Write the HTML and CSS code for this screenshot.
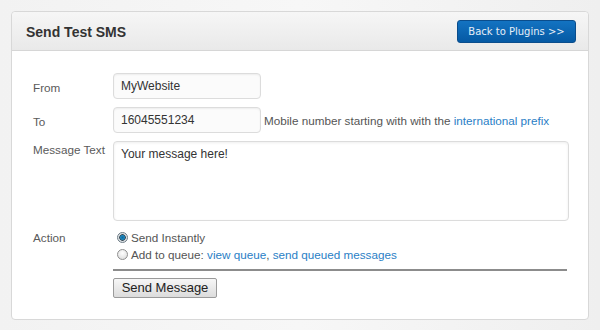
FILE: index.html
```html
<!DOCTYPE html>
<html>
<head>
<meta charset="utf-8">
<link rel="stylesheet" href="styles.css">
</head>
<body>
<div class="panel">
  <div class="panel-head">
    <h2 class="title">Send Test SMS</h2>
    <a class="btn-primary" href="#">Back to Plugins &gt;&gt;</a>
  </div>
  <form class="panel-body">
    <div class="row">
      <label class="lbl">From</label>
      <div class="field"><input class="txt" type="text" value="MyWebsite"></div>
    </div>
    <div class="row">
      <label class="lbl">To</label>
      <div class="field"><input class="txt" type="text" value="16045551234"><span class="hint">Mobile number starting with with the <a href="#">international prefix</a></span></div>
    </div>
    <div class="row row-top">
      <label class="lbl lbl-top">Message Text</label>
      <div class="field"><textarea class="area">Your message here!</textarea></div>
    </div>
    <div class="row row-top action">
      <label class="lbl lbl-action">Action</label>
      <div class="field options">
        <label class="opt"><input class="radio" type="radio" name="act" checked>Send Instantly</label>
        <label class="opt"><input class="radio" type="radio" name="act">Add to queue: <a href="#">view queue</a>, <a href="#">send queued messages</a></label>
        <div class="sep"></div>
        <button class="btn" type="button">Send Message</button>
      </div>
    </div>
  </form>
</div>
</body>
</html>
```
FILE: styles.css
```css
html, body {
  margin: 0;
  padding: 0;
}
body {
  background: linear-gradient(90deg, #f2f2f2, #f7f7f7 50%, #efefef);
  width: 600px;
  height: 330px;
  font-family: "Liberation Sans", Arial, sans-serif;
  font-size: 11.7px;
  color: #555;
  overflow: hidden;
}
a {
  color: #2a80c6;
  text-decoration: none;
}
.panel {
  margin: 11px 0 0 11px;
  width: 576px;
  height: 307px;
  background: #fff;
  border: 1px solid #d8d8d8;
  border-radius: 4px;
  box-sizing: content-box;
}
.panel-head {
  height: 38px;
  display: flex;
  align-items: center;
  justify-content: space-between;
  padding: 0 12px 0 14px;
  background: linear-gradient(#f6f6f6, #e9e9e9);
  border-bottom: 1px solid #d6d6d6;
  border-radius: 4px 4px 0 0;
}
.title {
  margin: 0;
  font-size: 14px;
  font-weight: bold;
  color: #333;
  padding-top: 1px;
}
.btn-primary {
  display: flex;
  align-items: center;
  justify-content: center;
  width: 117px;
  height: 21px;
  border: 1px solid #0a4d8c;
  border-radius: 3px;
  background: linear-gradient(#1373c2, #0559a3);
  color: #e6eef7;
  font-family: "DejaVu Sans", Verdana, sans-serif;
  font-size: 10px;
}
.panel-body {
  padding: 22px 20px 0 21px;
  display: flex;
  flex-direction: column;
  gap: 8px;
}
.row {
  display: grid;
  grid-template-columns: 80px 1fr;
  align-items: center;
}
.row-top {
  align-items: start;
}
.lbl {
  color: #5a5a5a;
  padding-top: 2px;
}
.lbl-top {
  padding-top: 2px;
}
.lbl-action {
  padding-top: 2px;
}
.field {
  display: flex;
  align-items: center;
}
.txt {
  box-sizing: border-box;
  width: 148px;
  height: 26px;
  border: 1px solid #dcdcdc;
  border-radius: 4px;
  background: #fbfbfb;
  box-shadow: inset 0 1px 2px rgba(0,0,0,0.06);
  padding: 0 7px;
  font-family: "Liberation Sans", Arial, sans-serif;
  font-size: 12px;
  color: #333;
  margin: 0;
}
.hint {
  margin-left: 3px;
  color: #555;
}
.area {
  box-sizing: border-box;
  width: 456px;
  height: 80px;
  border: 1px solid #dcdcdc;
  border-radius: 4px;
  background: #fff;
  box-shadow: inset 0 1px 3px rgba(0,0,0,0.07);
  padding: 5px 7px;
  font-family: "Liberation Sans", Arial, sans-serif;
  font-size: 12px;
  color: #333;
  resize: none;
  margin: 0;
}
.options {
  flex-direction: column;
  align-items: flex-start;
  padding-top: 0;
}
.opt {
  display: flex;
  align-items: center;
  height: 17px;
  color: #555;
  white-space: pre;
}
.radio {
  -webkit-appearance: none;
  appearance: none;
  width: 11px;
  height: 11px;
  margin: 0 3px 0 4px;
  border: 1px solid #8f8f8f;
  border-radius: 50%;
  background: radial-gradient(circle at 50% 35%, #ffffff, #d8d8d8);
  box-sizing: border-box;
}
.radio:checked {
  background: radial-gradient(circle, #0f6a9c 0, #1a86bf 2px, #3b4a55 3px, #cfd6da 3.5px, #eef1f3 5px);
  border-color: #6e7c86;
}
.sep {
  width: 454px;
  height: 0;
  border-top: 2px solid #8c8c8c;
  margin-top: 6px;
}
.btn {
  margin-top: 7px;
  height: 20px;
  width: 104px;
  padding: 0;
  border: 1px solid #9a9a9a;
  border-radius: 2px;
  background: linear-gradient(#f7f7f7, #dcdcdc);
  font-family: "Liberation Sans", Arial, sans-serif;
  font-size: 13px;
  color: #222;
  line-height: 18px;
}
```
